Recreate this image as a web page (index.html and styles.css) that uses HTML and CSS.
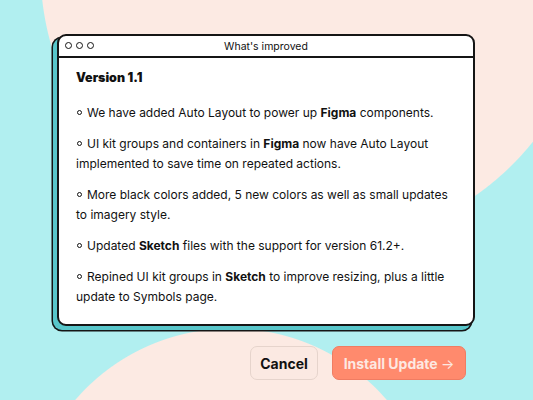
FILE: index.html
```html
<!DOCTYPE html>
<html>
<head>
<meta charset="UTF-8" />
<title>What's improved</title>
<link rel="stylesheet" href="styles.css">
</head>
<body>
<div class="page">

<div class="window">
<div class="titleBar">
<div class="dots">
<span class="dot"></span>
<span class="dot"></span>
<span class="dot"></span>
</div>
<div class="title">What's improved</div>
</div>

<div class="content">
<h3>Version 1.1</h3>
<p>We have added Auto Layout to power up <b>Figma</b> components.</p>
<p>UI kit groups and containers in <b>Figma</b> now have Auto Layout implemented to save time on repeated actions.</p>
<p>More black colors added, 5 new colors as well as small updates to imagery style.</p>
<p>Updated <b>Sketch</b> files with the support for version 61.2+.</p>
<p>Repined UI kit groups in <b>Sketch</b> to improve resizing, plus a little update to Symbols page.</p>
</div>
</div>

<div class="buttons">
<button class="butCancel" type="button">Cancel</button>
<button class="butInstall" type="button">Install Update <span class="arrow">&rarr;</span></button>
</div>

</div>
</body>
</html>
```

FILE: styles.css
```css
html, body{
margin: 0;
height: 100%;
}

body{
font-family: Inter, "Noto Sans", sans-serif;
color: #111;
background:
  radial-gradient(circle 277px at 317px -31px, #fceae3 276px, transparent 277px),
  radial-gradient(circle 206px at 231px 534px, #fceae3 205px, transparent 206px),
  #b1eff0;
overflow: hidden;
}

.page{
padding: 34px 0 0 57px;
width: 418px;
}

.window{
background: #fff;
border: 2px solid #151515;
border-radius: 9px;
box-shadow: -4px 4px 0 0 #58c6ca, -4px 4px 0 1.5px #151515;
}

.titleBar{
position: relative;
height: 20px;
border-bottom: 2px solid #151515;
display: flex;
align-items: center;
justify-content: center;
}

.dots{
position: absolute;
left: 6px;
top: 6px;
display: flex;
gap: 4px;
}

.dot{
width: 5px;
height: 5px;
border: 1.5px solid #151515;
border-radius: 50%;
}

.title{
font-size: 10.5px;
}

.content{
padding: 10px 17px 17px 17px;
font-size: 12px;
line-height: 20px;
}

.content h3{
margin: 0 0 15px 0;
font-size: 12.5px;
font-weight: 900;
}

.content p{
margin: 0;
}

.content p + p{
margin-top: 11px;
}

.content p::before{
content: "";
display: inline-block;
width: 3px;
height: 3px;
border: 1.3px solid #111;
border-radius: 50%;
margin: 0 5px 2px 1px;
vertical-align: middle;
}

.content b{
font-weight: 700;
}

.buttons{
display: flex;
justify-content: flex-end;
gap: 14px;
margin-top: 20px;
padding-right: 9px;
}

.buttons button{
font-family: Inter, "Noto Sans", sans-serif;
font-size: 14px;
font-weight: 700;
height: 34px;
border-radius: 7px;
cursor: pointer;
}

.butCancel{
width: 68px;
background: #fbe9e2;
border: 1px solid #e6d4cc;
color: #111;
}

.butInstall{
width: 134px;
background: #ff8a6d;
border: 1px solid #f07c62;
color: #fde8e1;
}

.arrow{
font-weight: 400;
}
```
